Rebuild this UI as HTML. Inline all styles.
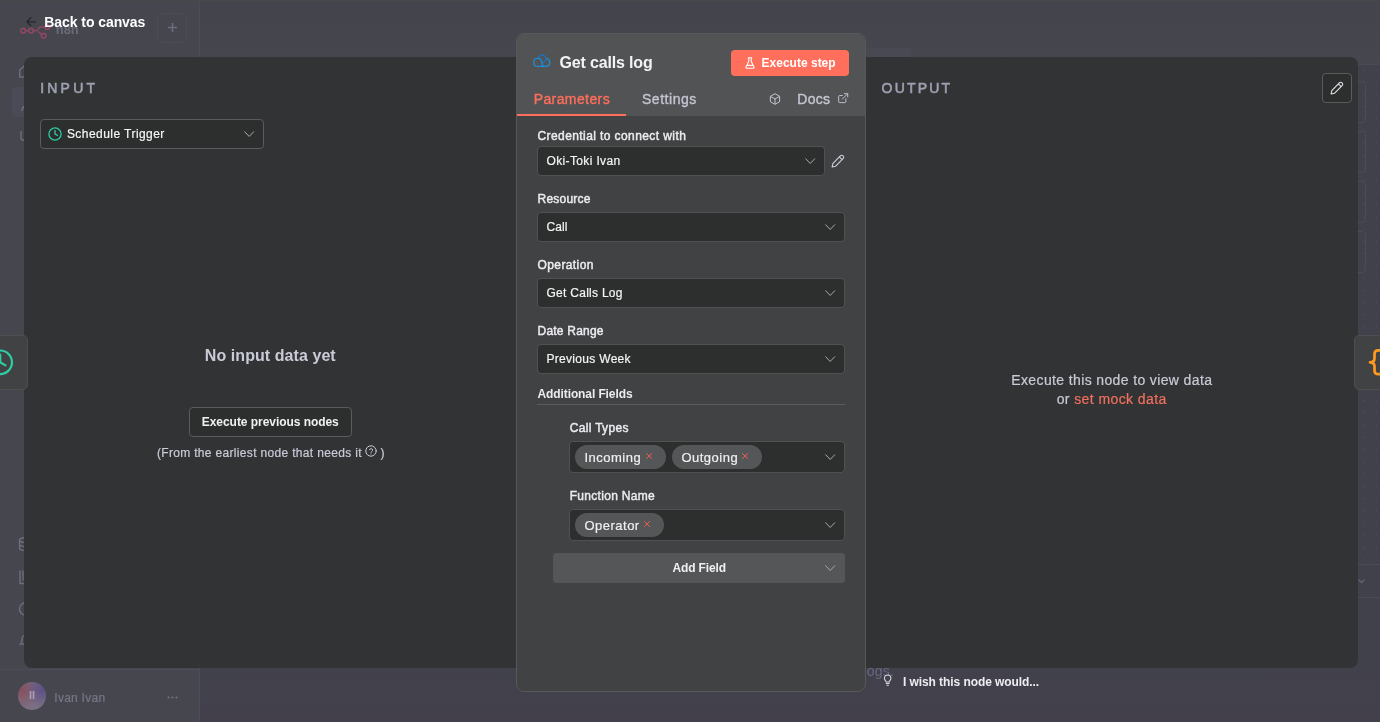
<!DOCTYPE html>
<html lang="en">
<head>
<meta charset="utf-8">
<title>Get calls log - n8n</title>
<style>
*{box-sizing:border-box;margin:0;padding:0}
html,body{width:1380px;height:722px;overflow:hidden}
body{position:relative;background:#44444d;font-family:"Liberation Sans",Arial,sans-serif;color:#eeeef1;font-size:12px;-webkit-font-smoothing:antialiased}
#root{position:absolute;left:0;top:0;width:1380px;height:722px;will-change:transform}
.abs{position:absolute}
svg{display:block;overflow:visible}
.t{position:absolute;white-space:nowrap;line-height:1}

/* ---------- dimmed background app ---------- */
#bg{position:absolute;left:0;top:0;width:1380px;height:722px;background:linear-gradient(#44444c,#46464f 57px,#41414b 100%)}
#sidebar{position:absolute;left:0;top:0;width:200px;height:722px;background:#46464f;border-right:1px solid #4c4c58}
#userbar{position:absolute;left:0;top:669px;width:199px;height:53px;border-top:1px solid #4c4c58}
#canvas{position:absolute;left:1340px;top:64px;width:40px;height:501px;background-color:#41414b;border-top:1px solid #4a4a55;border-bottom:1px solid #4b4b57;
 background-image:radial-gradient(circle,#4d4d59 0.6px,transparent 1.050px);background-size:12.25px 12.25px;background-position:17.975px -1.3px}
#logsbar{position:absolute;left:200px;top:565px;width:1180px;height:33px;background:#41414b;border-bottom:1px solid #4b4b57}
#below{position:absolute;left:200px;top:598px;width:1180px;height:124px;background:linear-gradient(#41414b 55%,#43404c)}

/* ---------- NDV panels ---------- */
#dark{position:absolute;left:24px;top:57px;width:1334px;height:611px;background:#323335;border-radius:8px}
#main{position:absolute;left:516px;top:33px;width:350px;height:659px;background:#414244;border:1px solid #57585a;border-radius:8px;overflow:hidden}
#head{position:absolute;left:0;top:0;width:348px;height:82px;background:#525355}
.lbl{position:absolute;white-space:nowrap;line-height:1;font-size:12px;color:#ececf0;-webkit-text-stroke:.45px}
.sel{position:absolute;height:30px;background:#2d2e2e;border:1px solid #505153;border-radius:4px}
.sel .v{position:absolute;left:8px;top:8px;line-height:1;font-size:12px;color:#f2f2f4;white-space:nowrap}
.chev{position:absolute;right:8px;top:11px;width:11px;height:7px}
.tag{position:absolute;height:24px;border-radius:12px;background:#555658;font-size:13px;line-height:25px;color:#f0f0f3;padding-left:9.4px;white-space:nowrap;letter-spacing:.5px;-webkit-text-stroke:.2px}
.tag svg{position:absolute;top:8.3px}
.md{-webkit-text-stroke:.3px}
</style>
</head>
<body>
<div id="root">
<!-- ===== dimmed background app (behind modal overlay) ===== -->
<div id="bg"></div>
<div id="canvas"></div>
<div id="logsbar"></div>
<div id="below"></div>
<div id="sidebar"></div>
<div id="userbar"></div>
<div class="abs" style="left:0;top:0;width:1380px;height:1px;background:#48484b"></div>

<!-- n8n logo -->
<svg class="abs" style="left:20px;top:24px" width="31" height="16" viewBox="0 0 31 16" fill="none" stroke="#8f4763" stroke-width="1.6">
  <circle cx="3.2" cy="6.7" r="2.3"/><circle cx="11" cy="6.7" r="2.3"/>
  <circle cx="27.4" cy="3" r="2.3"/><circle cx="23.7" cy="11.7" r="2.3"/>
  <path d="M5.5 6.7h3.2M13.3 6.7h2.2c1.6 0 2.4-.6 2.8-1.8.4-1.3 1.2-1.9 2.8-1.9h4M18.3 7.2c.5 1.3 1.4 1.9 2.8 2.6l.8.4"/>
</svg>
<div class="t" style="left:55.700px;top:23.200px;font-size:13px;font-weight:bold;color:#6b6b79">n8n</div>
<div class="abs" style="left:157px;top:13px;width:30px;height:30px;border:1px solid #4c4c58;border-radius:5px"></div>
<svg class="abs" style="left:167.500px;top:23.400px" width="9" height="9" viewBox="0 0 9 9" stroke="#6c6c7b" stroke-width="1.600" fill="none"><path d="M4.5 0v9M0 4.500h9"/></svg>

<!-- sidebar item slivers -->
<div class="abs" style="left:12px;top:87px;width:176px;height:30px;border-radius:4px;background:#4b4b57"></div>
<svg class="abs" style="left:18px;top:63px" width="16" height="16" viewBox="0 0 16 16" fill="none" stroke="#6e6e7c" stroke-width="1.4" stroke-linejoin="round"><path d="M1.700 7 8 1.500 14.300 7v7H1.700z"/></svg>
<svg class="abs" style="left:20px;top:95.500px" width="16" height="16" viewBox="0 0 16 16" fill="none" stroke="#6e6e7c" stroke-width="1.400"><circle cx="8" cy="4.500" r="3"/><path d="M2 15c0-3.500 2.500-5.500 6-5.500s6 2 6 5.500"/></svg>
<svg class="abs" style="left:18.500px;top:126px" width="16" height="16" viewBox="0 0 16 16" fill="none" stroke="#6e6e7c" stroke-width="1.400"><path d="M2 5v7.500a1.500 1.500 0 0 0 1.500 1.500h9M7 3.500v6"/></svg>
<svg class="abs" style="left:18px;top:536px" width="16" height="16" viewBox="0 0 16 16" fill="none" stroke="#6e6e7c" stroke-width="1.400"><ellipse cx="8" cy="4" rx="6.500" ry="2.500"/><path d="M1.500 4v4c0 1.400 3 2.500 6.500 2.500M1.500 8v4c0 1.400 3 2.500 6.500 2.500"/></svg>
<svg class="abs" style="left:18px;top:568.5px" width="16" height="16" viewBox="0 0 16 16" fill="none" stroke="#6e6e7c" stroke-width="1.400"><path d="M2 1.500v13h12M5 1.500v10"/></svg>
<svg class="abs" style="left:18px;top:600.5px" width="16" height="16" viewBox="0 0 16 16" fill="none" stroke="#6e6e7c" stroke-width="1.400"><circle cx="8" cy="8" r="6.500"/></svg>
<svg class="abs" style="left:18px;top:632px" width="16" height="16" viewBox="0 0 16 16" fill="none" stroke="#6e6e7c" stroke-width="1.400"><path d="M2.500 12c1.500-1.500 1.500-3 1.500-5a4 4 0 0 1 8 0c0 2 0 3.500 1.500 5z"/></svg>

<!-- user -->
<div class="abs" style="left:18px;top:682px;width:28px;height:28px;border-radius:50%;background:radial-gradient(circle at 88% 28%,#5c5088 0%,rgba(92,80,136,0) 55%),radial-gradient(circle at 12% 28%,#87505c 0%,rgba(135,80,92,0) 60%),#7b6f84"></div>
<div class="t" style="left:29px;top:690px;font-size:11px;font-weight:bold;color:#aaa1b6">II</div>
<div class="t" style="left:54.300px;top:691.850px;font-size:12px;color:#767687;letter-spacing:.26px;-webkit-text-stroke:.2px">Ivan Ivan</div>
<svg class="abs" style="left:166.600px;top:695.500px" width="11" height="3" viewBox="0 0 11 3" fill="#73737f"><circle cx="1.500" cy="1.500" r="1.100"/><circle cx="5.500" cy="1.500" r="1.100"/><circle cx="9.500" cy="1.500" r="1.100"/></svg>

<!-- faint bits behind -->
<div class="abs" style="left:866px;top:48px;width:45px;height:10px;background:#494953;border-radius:3px 3px 0 0"></div>
<div class="abs" style="left:1330px;top:81px;width:36px;height:42px;border:1px solid #4b4b57;border-radius:4px"></div>
<div class="abs" style="left:1330px;top:131px;width:36px;height:42px;border:1px solid #4b4b57;border-radius:4px"></div>
<div class="abs" style="left:1330px;top:181px;width:36px;height:42px;border:1px solid #4b4b57;border-radius:4px"></div>
<div class="abs" style="left:1330px;top:231px;width:36px;height:42px;border:1px solid #4b4b57;border-radius:4px"></div>
<svg class="abs" style="left:1357.500px;top:578.500px" width="7" height="5" viewBox="0 0 7 5" fill="none" stroke="#686876" stroke-width="1.200"><path d="M.5.700 3.500 3.700 6.500.700"/></svg>
<div class="t" style="left:866.700px;top:663.800px;font-size:14px;color:#666981;letter-spacing:.25px">ogs.</div>

<!-- ===== NDV ===== -->
<!-- back to canvas -->
<svg class="abs" style="left:26px;top:17px" width="10" height="10" viewBox="0 0 10 10" fill="none" stroke="#27272b" stroke-width="1.300" stroke-linecap="round" stroke-linejoin="round"><path d="M9.400 4.800H.8M4.800.8.800 4.800l4 4"/></svg>
<div class="t" style="left:44.300px;top:15.150px;font-size:14px;font-weight:bold;color:#fff;letter-spacing:-.07px">Back to canvas</div>

<div id="dark"></div>

<!-- side node tabs -->
<div class="abs" style="left:-6px;top:335px;width:34px;height:55px;background:#414244;border:1px solid #4d4e50;border-radius:5px"></div>
<svg class="abs" style="left:-13px;top:349px" width="27" height="27" viewBox="0 0 27 27" fill="none" stroke="#2dcca3" stroke-width="2.200" stroke-linecap="round"><circle cx="13.200" cy="13.300" r="11.800"/><path d="M13.200 5.500v7.800l5.300 3.100"/></svg>
<div class="abs" style="left:1354px;top:335px;width:34px;height:55px;background:#414244;border:1px solid #4d4e50;border-radius:5px"></div>
<svg class="abs" style="left:1367px;top:348px" width="14" height="29" viewBox="0 0 14 29" fill="none" stroke="#ff9a1f" stroke-width="2.700" stroke-linecap="round" stroke-linejoin="round"><path d="M13 2.400h-1.500c-2.600 0-4 1.300-4 3.800v4c0 2.400-1.300 4.100-4.500 4.100 3.200 0 4.500 1.700 4.500 4.100v4c0 2.500 1.400 3.800 4 3.800H13"/></svg>



<!-- INPUT side -->
<div class="t" style="left:40.200px;top:81.250px;font-size:14px;color:#9ea1b1;letter-spacing:3.200px;-webkit-text-stroke:.55px">INPUT</div>
<div class="sel" style="left:40px;top:119px;width:224px;border-color:#595b5e"></div>
<svg class="abs" style="left:48px;top:127px" width="14" height="14" viewBox="0 0 14 14" fill="none" stroke="#2dcca3" stroke-width="1.300" stroke-linecap="round"><circle cx="7" cy="7" r="6.100"/><path d="M7 3.300V7l2.500 1.300"/></svg>
<div class="t" style="left:66.900px;top:128.400px;font-size:12px;color:#f4f4f6;letter-spacing:.45px;-webkit-text-stroke:.2px">Schedule Trigger</div>
<svg class="abs" style="left:243.800px;top:131.200px" width="10.400" height="6.600" viewBox="0 0 11 7" fill="none" stroke="#a8abb7" stroke-width="1.050" stroke-linecap="round" stroke-linejoin="round"><path d="M.7.800 5.500 5.800 10.300.800"/></svg>

<div class="t" style="left:204.800px;top:347.650px;font-size:16px;font-weight:bold;color:#c9cbd7;letter-spacing:.07px">No input data yet</div>
<div class="abs" style="left:189px;top:407px;width:163px;height:30px;background:#2d2e2e;border:1px solid #595b5e;border-radius:4px"></div>
<div class="t" style="left:201.800px;top:416px;font-size:12px;font-weight:bold;color:#f0f0f2;letter-spacing:-.05px">Execute previous nodes</div>
<div class="t" style="left:156.900px;top:447.250px;font-size:12px;color:#c9cbd7;letter-spacing:.33px;-webkit-text-stroke:.2px">(From the earliest node that needs it</div>
<svg class="abs" style="left:365px;top:445px" width="12" height="12" viewBox="0 0 12 12" fill="none" stroke="#c9cbd7" stroke-width="1" stroke-linecap="round"><circle cx="6" cy="6" r="5.200"/><path d="M4.500 4.700a1.600 1.600 0 0 1 3.100.5c0 1-1.600 1.300-1.600 2.100M6 8.900v.1"/></svg>
<div class="t" style="left:380.600px;top:447.250px;font-size:12px;color:#c9cbd7;-webkit-text-stroke:.2px">)</div>

<!-- OUTPUT side -->
<div class="t" style="left:881.600px;top:81.150px;font-size:14px;color:#9ea1b1;letter-spacing:2.200px;-webkit-text-stroke:.55px">OUTPUT</div>
<div class="abs" style="left:1322px;top:73px;width:30px;height:30px;background:#2d2e2e;border:1px solid #595b5e;border-radius:4px"></div>
<svg class="abs" style="left:1330px;top:81px" width="14" height="14" viewBox="0 0 14 14" fill="none" stroke="#e2e3e9" stroke-width="1.100" stroke-linecap="round" stroke-linejoin="round"><path d="M9.300 1.800a1.900 1.900 0 0 1 2.800 2.800L4.400 12.300l-3.300.700.700-3.300zM8.300 2.900l2.800 2.800"/></svg>
<div class="t" style="left:1011.300px;top:373.150px;font-size:14px;color:#c9cbd7;letter-spacing:.37px;-webkit-text-stroke:.2px">Execute this node to view data</div>
<div class="t" style="left:1056.700px;top:392.350px;font-size:14px;color:#c9cbd7;letter-spacing:.37px;-webkit-text-stroke:.2px">or <span style="color:#f1705f;letter-spacing:.42px">set mock data</span></div>

<!-- feature request -->
<svg class="abs" style="left:883.400px;top:674.300px" width="9.300" height="12.100" viewBox="0 0 10 13" fill="none" stroke="#d9dae1" stroke-width="1.100" stroke-linecap="round"><path d="M3.400 8.600c0-1-1.900-1.900-1.900-4a3.500 3.500 0 0 1 7 0c0 2.100-1.900 3-1.900 4zM3.400 10.300h3.200M4.200 12h1.600"/></svg>
<div class="t" style="left:903px;top:676.250px;font-size:12px;font-weight:bold;color:#ededf1;letter-spacing:-.08px">I wish this node would...</div>

<!-- ===== center parameters panel ===== -->
<div id="main"><div id="head"></div></div>
<div class="abs" style="left:517px;top:114px;width:109px;height:2px;background:#ff6f5c"></div>

<svg class="abs" style="left:526px;top:48px" width="36" height="26" viewBox="0 0 36 26" fill="none" stroke-width="1.300" stroke-linecap="round"><path stroke="#1f6fbe" d="M12.820 9.670A3.600 3.600 0 1 1 17.530 13.980Q17.300 14.600 16.900 14.900"/><path stroke="#1a8fd6" d="M20 18.450H11.700A4 4 0 1 1 15.640 13.750C15.800 15.800 16.300 17.500 17.300 18.450"/><path stroke="#1a8fd6" d="M20.690 10.660A3.950 3.950 0 0 1 20 18.450"/></svg>
<div class="t" style="left:559.600px;top:54.650px;font-size:16px;font-weight:bold;color:#f3f3f6;letter-spacing:-.165px">Get calls log</div>
<div class="abs" style="left:731px;top:50px;width:118px;height:26px;border-radius:4px;background:#ff6f5c"></div>
<svg class="abs" style="left:745px;top:57px" width="10" height="12" viewBox="0 0 10 12" fill="none" stroke="#fff" stroke-width="1.100" stroke-linecap="round" stroke-linejoin="round"><path d="M3.200.700h3.600M3.800.700v3.600L1 10.200a.800.800 0 0 0 .700 1.100h6.600a.800.800 0 0 0 .700-1.100L6.200 4.300V.700M2.300 8.400h5.400"/></svg>
<div class="t" style="left:761.600px;top:56.600px;font-size:12px;font-weight:bold;color:#fff">Execute step</div>

<div class="t" style="left:533.700px;top:92.050px;font-size:14px;color:#ff6f5c;letter-spacing:.4px;-webkit-text-stroke:.35px">Parameters</div>
<div class="t" style="left:642px;top:92.050px;font-size:14px;color:#c3c5d1;letter-spacing:.53px;-webkit-text-stroke:.35px">Settings</div>
<svg class="abs" style="left:769px;top:93px" width="12" height="12" viewBox="0 0 12 12" fill="none" stroke="#c3c5d1" stroke-width="1" stroke-linejoin="round"><path d="M6 .700 10.600 3.300v5.400L6 11.300 1.400 8.700V3.300zM1.600 3.400 6 6l4.400-2.600M6 6v5.200"/></svg>
<div class="t" style="left:797.300px;top:92.050px;font-size:14px;color:#c3c5d1;letter-spacing:.3px;-webkit-text-stroke:.4px">Docs</div>
<svg class="abs" style="left:837.600px;top:92.600px" width="10.400" height="10.400" viewBox="0 0 11 11" fill="none" stroke="#c3c5d1" stroke-width="1" stroke-linecap="round" stroke-linejoin="round"><path d="M8.300 6.200v3a1 1 0 0 1-1 1H1.700a1 1 0 0 1-1-1V3.700a1 1 0 0 1 1-1h3M6.800.700h3.500v3.500M4.600 6.400 10.200.800"/></svg>

<!-- fields -->
<div class="lbl" style="left:537.500px;top:130px;letter-spacing:.41px">Credential to connect with</div>
<div class="sel" style="left:537px;top:146px;width:288px"></div>
<div class="t" style="left:546.500px;top:154.650px;font-size:12px;color:#f4f4f6;letter-spacing:.36px;-webkit-text-stroke:.2px">Oki-Toki Ivan</div>
<svg class="abs chv" style="left:804.800px;top:158.200px" width="10.400" height="6.600" viewBox="0 0 11 7" fill="none" stroke="#a8abb7" stroke-width="1.050" stroke-linecap="round" stroke-linejoin="round"><path d="M.7.800 5.500 5.800 10.300.800"/></svg>
<svg class="abs" style="left:831px;top:154px" width="14" height="14" viewBox="0 0 14 14" fill="none" stroke="#cfd1da" stroke-width="1.100" stroke-linecap="round" stroke-linejoin="round"><path d="M9.300 1.800a1.900 1.900 0 0 1 2.800 2.800L4.400 12.300l-3.300.700.700-3.300zM8.300 2.900l2.800 2.800"/></svg>

<div class="lbl" style="left:537.500px;top:193.050px;letter-spacing:.23px">Resource</div>
<div class="sel" style="left:537px;top:212px;width:308px"></div>
<div class="t" style="left:546.500px;top:221.050px;font-size:12px;color:#f4f4f6;letter-spacing:.1px;-webkit-text-stroke:.2px">Call</div>
<svg class="abs" style="left:824.800px;top:224.200px" width="10.400" height="6.600" viewBox="0 0 11 7" fill="none" stroke="#a8abb7" stroke-width="1.050" stroke-linecap="round" stroke-linejoin="round"><path d="M.7.800 5.500 5.800 10.300.800"/></svg>

<div class="lbl" style="left:537.500px;top:259.050px;letter-spacing:.4px">Operation</div>
<div class="sel" style="left:537px;top:278px;width:308px"></div>
<div class="t" style="left:546.500px;top:287.050px;font-size:12px;color:#f4f4f6;letter-spacing:.27px;-webkit-text-stroke:.2px">Get Calls Log</div>
<svg class="abs" style="left:824.800px;top:290.200px" width="10.400" height="6.600" viewBox="0 0 11 7" fill="none" stroke="#a8abb7" stroke-width="1.050" stroke-linecap="round" stroke-linejoin="round"><path d="M.7.800 5.500 5.800 10.300.800"/></svg>

<div class="lbl" style="left:537.500px;top:325.050px;letter-spacing:.22px">Date Range</div>
<div class="sel" style="left:537px;top:344px;width:308px"></div>
<div class="t" style="left:546.500px;top:353.050px;font-size:12px;color:#f4f4f6;letter-spacing:.3px;-webkit-text-stroke:.2px">Previous Week</div>
<svg class="abs" style="left:824.800px;top:356.200px" width="10.400" height="6.600" viewBox="0 0 11 7" fill="none" stroke="#a8abb7" stroke-width="1.050" stroke-linecap="round" stroke-linejoin="round"><path d="M.7.800 5.500 5.800 10.300.800"/></svg>

<div class="lbl" style="left:537.500px;top:388px;font-weight:bold;-webkit-text-stroke:0;letter-spacing:-.1px">Additional Fields</div>
<div class="abs" style="left:537px;top:404px;width:308px;height:1px;background:#5b5c5e"></div>

<div class="lbl" style="left:569.700px;top:422px;letter-spacing:.33px">Call Types</div>
<div class="sel" style="left:569px;top:441px;width:276px;height:32px"></div>
<div class="tag" style="left:575px;top:445px;width:91px">Incoming<svg width="6.200" height="6.200" viewBox="0 0 7 7" fill="none" stroke="#f0604f" stroke-width="1.100" stroke-linecap="round" style="left:70.7px"><path d="M.6.600l5.800 5.800M6.400.600.600 6.400"/></svg></div>
<div class="tag" style="left:672px;top:445px;width:90px">Outgoing<svg width="6.200" height="6.200" viewBox="0 0 7 7" fill="none" stroke="#f0604f" stroke-width="1.100" stroke-linecap="round" style="left:70px"><path d="M.6.600l5.800 5.800M6.400.600.600 6.400"/></svg></div>
<svg class="abs" style="left:824.800px;top:454.200px" width="10.400" height="6.600" viewBox="0 0 11 7" fill="none" stroke="#a8abb7" stroke-width="1.050" stroke-linecap="round" stroke-linejoin="round"><path d="M.7.800 5.500 5.800 10.300.800"/></svg>

<div class="lbl" style="left:569.700px;top:490.200px;letter-spacing:.3px">Function Name</div>
<div class="sel" style="left:569px;top:509px;width:276px;height:32px"></div>
<div class="tag" style="left:575px;top:513px;width:89px">Operator<svg width="6.200" height="6.200" viewBox="0 0 7 7" fill="none" stroke="#f0604f" stroke-width="1.100" stroke-linecap="round" style="left:68.6px"><path d="M.6.600l5.800 5.800M6.400.600.600 6.400"/></svg></div>
<svg class="abs" style="left:824.800px;top:522.200px" width="10.400" height="6.600" viewBox="0 0 11 7" fill="none" stroke="#a8abb7" stroke-width="1.050" stroke-linecap="round" stroke-linejoin="round"><path d="M.7.800 5.500 5.800 10.300.800"/></svg>

<div class="abs" style="left:553px;top:553px;width:292px;height:30px;border-radius:4px;background:#555658"></div>
<div class="t" style="left:672.500px;top:562.450px;font-size:12px;font-weight:bold;color:#f0f0f3;letter-spacing:-.15px">Add Field</div>
<svg class="abs" style="left:824.800px;top:565.200px" width="10.400" height="6.600" viewBox="0 0 11 7" fill="none" stroke="#a8abb7" stroke-width="1.050" stroke-linecap="round" stroke-linejoin="round"><path d="M.7.800 5.500 5.800 10.300.800"/></svg>
</div>
</body>
</html>
